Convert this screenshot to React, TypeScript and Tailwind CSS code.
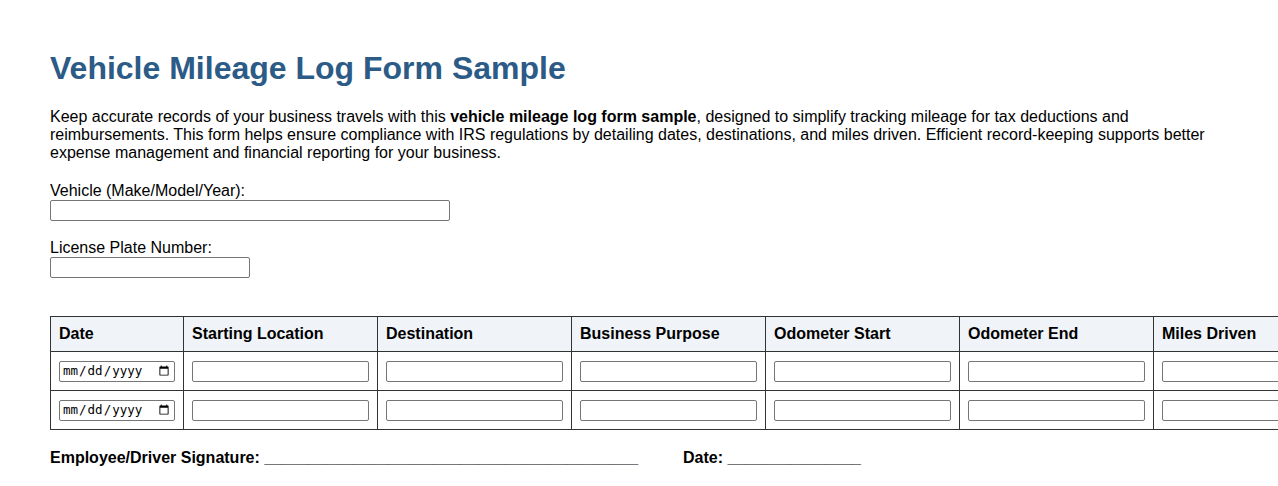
const columns = [
  'Starting Location', 'Destination', 'Business Purpose',
  'Odometer Start', 'Odometer End', 'Miles Driven',
]

const inputCls = 'block h-[21px] border border-[#767676] rounded-[2px] bg-white px-[2px] text-[13px]'

function LogRow() {
  return (
    <tr>
      <td className="border border-[#333] px-2 py-[8.5px]">
        <input type="date"
          className="block h-[21px] w-[116px] border border-[#767676] rounded-[2px] bg-white pl-[2px] pr-[2px] text-[12.5px] text-black [font-family:'DejaVu_Sans_Mono',monospace]" />
      </td>
      {columns.map((c) => (
        <td key={c} className="border border-[#333] px-2 py-[8.5px]">
          <input type="text" className={`${inputCls} w-full`} />
        </td>
      ))}
    </tr>
  )
}

export default function App() {
  return (
    <div className="w-[1278px] overflow-hidden">
      <div className="px-[50px] pt-[50px] pb-6 text-black text-base [font-family:'Liberation_Sans',Arial,sans-serif]">
        <h1 className="text-[32px] font-bold text-[#2b5b86] leading-[37px] mb-[21px]">Vehicle Mileage Log Form Sample</h1>

        <p className="w-[1178px] leading-[18px]">
          Keep accurate records of your business travels with this <strong>vehicle mileage log form sample</strong>, designed to simplify tracking mileage for tax deductions and reimbursements. This form helps ensure compliance with IRS regulations by detailing dates, destinations, and miles driven. Efficient record-keeping supports better expense management and financial reporting for your business.
        </p>

        <div className="mt-[20px]">
          <label className="block leading-[18px]">Vehicle (Make/Model/Year):</label>
          <input type="text" className={`${inputCls} w-[400px]`} />
        </div>

        <div className="mt-[18px]">
          <label className="block leading-[18px]">License Plate Number:</label>
          <input type="text" className={`${inputCls} w-[200px]`} />
        </div>

        <table className="mt-[38px] border-collapse table-fixed w-[1297px]">
          <colgroup>
            <col className="w-[133px]" />
            {columns.map((c) => <col key={c} className="w-[194px]" />)}
          </colgroup>
          <thead>
            <tr className="bg-[#f0f4f8]">
              <th className="border border-[#333] px-2 h-[35px] text-left font-bold">Date</th>
              {columns.map((c) => (
                <th key={c} className="border border-[#333] px-2 h-[35px] text-left font-bold">{c}</th>
              ))}
            </tr>
          </thead>
          <tbody>
            <LogRow />
            <LogRow />
          </tbody>
        </table>

        <div className="mt-[19px] font-bold leading-[18px] whitespace-pre">
          Employee/Driver Signature: __________________________________________
          <span className="ml-[45px]">Date: _______________</span>
        </div>
      </div>
    </div>
  )
}
